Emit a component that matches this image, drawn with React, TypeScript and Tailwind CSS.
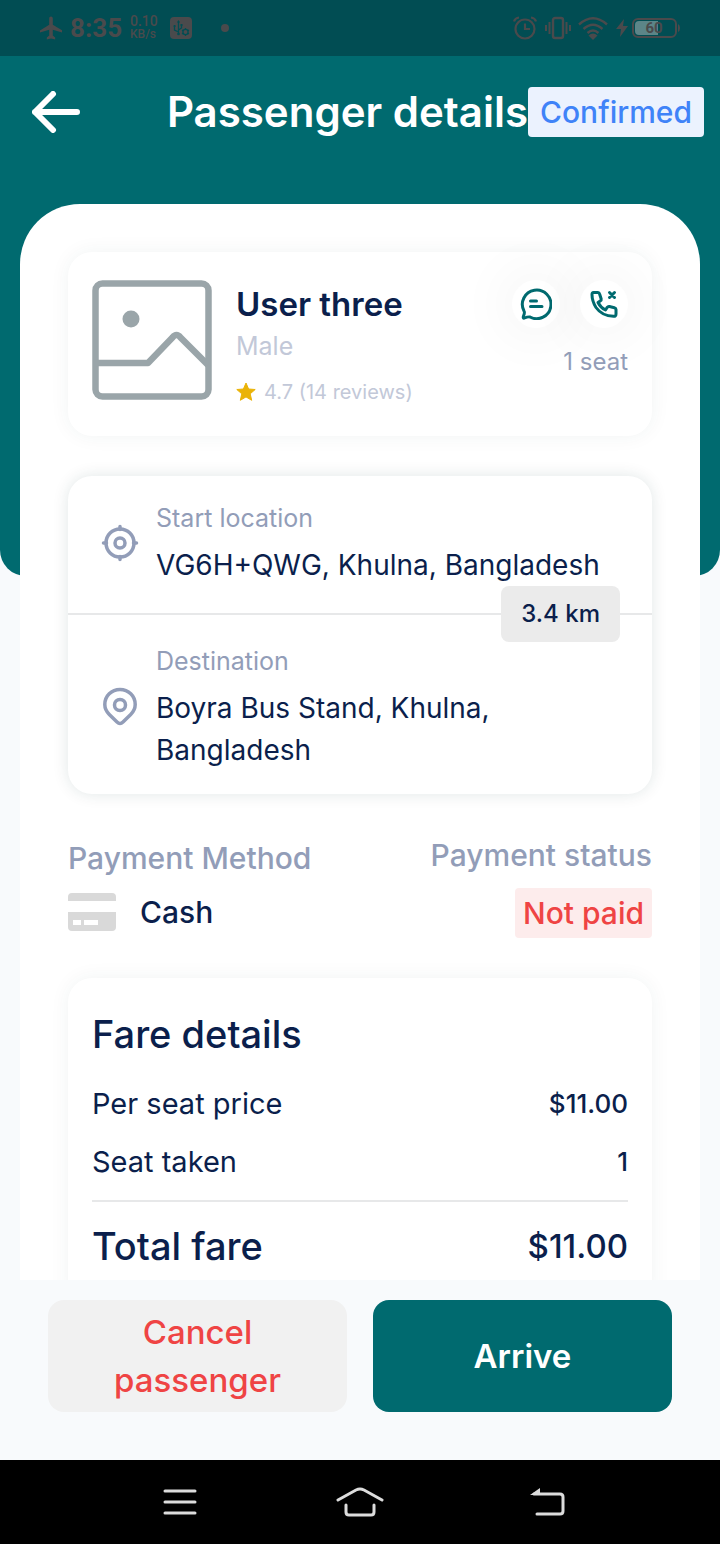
import React from "react";

const rows = [
  { label: "Per seat price", value: "$11.00" },
  { label: "Seat taken", value: "1" },
];

function StatusBar() {
  return (
    <header className="flex h-14 shrink-0 items-center justify-between bg-[#014d53] px-10 text-[#4a4a4c]">
      <div className="flex items-center">
        <svg width="22" height="24" viewBox="0 0 22 24" fill="currentColor" aria-hidden="true">
          <path d="M11 .5c-1.100 0-1.800.9-1.800 2v6.300L0 14.400v2.200l9.200-2.800v5.700l-2.400 2v1.900l4.200-1 4.200 1v-1.900l-2.400-2v-5.700l9.400 2.800v-2.200l-9.400-5.600V2.500c0-1.100-.7-2-1.800-2z" />
        </svg>
        <span className="ml-2 w-[52px] font-[Roboto] text-[26px] font-bold leading-8">8:35</span>
        <span className="ml-2 w-8 font-[Roboto] text-[14px] font-medium leading-[13px]">
          <span className="block">0.10</span>
          <span className="block text-[12px]">KB/s</span>
        </span>
        <svg className="ml-2" width="22" height="22" viewBox="0 0 22 22" aria-hidden="true">
          <rect width="22" height="22" rx="4" fill="currentColor" />
          <g fill="none" stroke="#014d53" strokeWidth="1.300">
            <path d="M8.500 17V4M8.500 15L4.500 13V9M8.500 13l3-2V7" />
            <circle cx="15.500" cy="15" r="2.600" />
            <path d="M15.500 11v1.500M15.500 17.500V19M12 13l1.300.8M17.700 16.200l1.300.8M12 17l1.300-.8M17.700 13.800L19 13" />
          </g>
          <path d="M8.500 3l1.500 2.500H7zM3.700 8h1.800v2H3.700zM10.600 7h1.800v2h-1.800z" fill="#014d53" />
          <circle cx="8.500" cy="17" r="1.300" fill="#014d53" />
        </svg>
        <span className="ml-[29px] h-2 w-2 rounded-full bg-current" />
      </div>
      <div className="flex items-center">
        <svg width="24" height="24" viewBox="0 0 24 24" fill="none" stroke="currentColor" strokeWidth="2.200" aria-hidden="true">
          <circle cx="12" cy="13" r="9.500" />
          <path d="M12 7.500V13h5M1 5.500Q2 2 6 1.500M23 5.500Q22 2 18 1.500" />
        </svg>
        <svg className="ml-2" width="26" height="24" viewBox="0 0 26 24" fill="none" stroke="currentColor" strokeWidth="2" aria-hidden="true">
          <rect x="8" y="2" width="10" height="20" rx="2" strokeWidth="2.400" />
          <path d="M1 9v6M4.500 6v12M21.500 6v12M25 9v6" />
        </svg>
        <svg className="ml-[7px]" width="30" height="24" viewBox="0 0 30 24" fill="none" stroke="currentColor" strokeWidth="2.400" aria-hidden="true">
          <path d="M1 8.500Q15-4 29 8.500M5.500 13Q15 4.500 24.500 13M9.500 17Q15 12 20.500 17" />
          <path d="M10.500 19.500Q15 15.500 19.500 19.500L15 24z" fill="currentColor" stroke="none" />
        </svg>
        <svg className="ml-2" width="12" height="18" viewBox="0 0 12 18" fill="currentColor" aria-hidden="true">
          <path d="M8 0L0 10h5l-1 8 8-11H7z" />
        </svg>
        <svg className="ml-1" width="48" height="20" viewBox="0 0 48 20" aria-hidden="true">
          <rect x="1" y="1" width="43" height="18" rx="5" fill="none" stroke="currentColor" strokeWidth="2" />
          <path d="M7 3h19v14H7a4 4 0 0 1-4-4V7a4 4 0 0 1 4-4z" fill="#5c8588" />
          <path d="M46 6q2 1 2 4t-2 4z" fill="currentColor" />
          <text x="22" y="15" textAnchor="middle" fontFamily="Roboto" fontSize="15" fontWeight="700" fill="currentColor">60</text>
        </svg>
      </div>
    </header>
  );
}

function PassengerCard() {
  return (
    <section className="flex h-[184px] rounded-3xl bg-white px-6 pt-7 shadow-[0_0_20px_rgba(0,60,60,0.06)]">
      <svg className="shrink-0" width="120" height="120" viewBox="0 0 120 120" fill="none" stroke="#9aa5a9" strokeWidth="6.500" aria-label="Passenger photo">
        <rect x="3.500" y="3.500" width="113" height="113" rx="7" />
        <path d="M4 83h52L80.500 57.500q4-5 8 0L116 85" strokeLinejoin="round" />
        <circle cx="39" cy="39" r="8.500" fill="#9aa5a9" stroke="none" />
      </svg>
      <div className="ml-6 min-w-0 flex-1">
        <h2 className="text-[33px] font-semibold leading-[48px] text-[#0b1f4c]">User three</h2>
        <p className="text-[25px] leading-9 text-[#c2c8d8]">Male</p>
        <p className="mt-3 flex items-center text-xl leading-8 text-[#c2c8d8]">
          <svg className="mr-2" width="20" height="20" viewBox="0 0 20 20" fill="#eab308" aria-hidden="true">
            <path d="M10 1l2.600 6 6.600.500-5 4.300 1.500 6.500L10 14.900l-5.700 3.400 1.500-6.500-5-4.300L7.400 7z" stroke="#eab308" strokeLinejoin="round" />
          </svg>
          4.7 (14 reviews)
        </p>
      </div>
      <div className="flex flex-col items-end">
        <div className="flex gap-5">
          <button aria-label="Message" className="flex h-12 w-12 items-center justify-center rounded-full bg-white shadow-[0_0_50px_16px_rgba(0,30,40,0.03)]">
            <svg width="32" height="32" viewBox="0 0 32 32" fill="none" stroke="#006a6f" strokeWidth="3" strokeLinecap="round" strokeLinejoin="round" aria-hidden="true">
              <path d="M4 23A14.300 14.300 0 1 1 10 29Q8.500 28.500 4 30.200Q2.800 30 3.500 28Q5 24.500 4 23z" />
              <path d="M10.500 13h6M10.500 18.500h11.500" />
            </svg>
          </button>
          <button aria-label="Call" className="flex h-12 w-12 items-center justify-center rounded-full bg-white shadow-[0_0_50px_16px_rgba(0,30,40,0.03)]">
            <svg width="32" height="32" viewBox="0 0 32 32" fill="none" stroke="#006a6f" strokeWidth="3" strokeLinecap="round" strokeLinejoin="round" aria-hidden="true">
              <path d="M5.500 4.500H10q1.200 0 1.600 1.500l1.600 5q.3 1.200-1 2l-2.200 1.500Q12.500 19.500 17.500 22l1.700-2.600q.8-1.200 2.200-.9l5 1.200q1.600.4 1.600 1.800V26q0 2.500-2.500 2.300Q14 28 8 19.500 4 13 4 6.500q0-2 1.500-2z" />
              <path d="M21.500 4.500l5 5M26.500 4.500l-5 5" />
            </svg>
          </button>
        </div>
        <p className="mt-4 text-[24px] leading-9 text-[#929db8]">1 seat</p>
      </div>
    </section>
  );
}

function RouteCard() {
  return (
    <section className="mt-10 rounded-3xl bg-white shadow-[0_0_16px_rgba(0,60,60,0.12)]">
      <div className="relative flex h-[139px] items-center border-b-2 border-[#e7e8e9] pb-1 pl-8 pr-6">
        <svg className="shrink-0" width="40" height="40" viewBox="0 0 40 40" fill="none" stroke="#929db8" strokeWidth="3.500" strokeLinecap="round" aria-hidden="true">
          <circle cx="20" cy="20" r="14" />
          <circle cx="20" cy="20" r="5" />
          <path d="M20 3.500v3M20 33.500v3M3.500 20h3M33.500 20h3" />
        </svg>
        <div className="ml-4">
          <p className="text-[25px] leading-9 text-[#929db8]">Start location</p>
          <p className="mt-2 text-[28px] leading-[42px]">VG6H+QWG, Khulna, Bangladesh</p>
        </div>
        <span className="absolute -bottom-[29px] right-8 rounded-lg bg-[#ebebeb] px-5 py-2 text-[24px] font-medium leading-10">3.4 km</span>
      </div>
      <div className="flex h-[179px] items-center pl-8 pr-6 pt-1">
        <svg className="shrink-0" width="40" height="40" viewBox="0 0 40 40" fill="none" stroke="#929db8" strokeWidth="3.500" strokeLinejoin="round" aria-hidden="true">
          <path d="M20 2.500C11.500 2.500 4.800 9 4.800 17.500c0 5 2 7.500 4.500 10L17 35q3 3 6 0l7.700-7.500c2.500-2.500 4.500-5 4.500-10C35.200 9 28.500 2.500 20 2.500z" />
          <circle cx="20" cy="18" r="5.500" />
        </svg>
        <div className="ml-4">
          <p className="text-[25px] leading-9 text-[#929db8]">Destination</p>
          <p className="mt-2 text-[28px] leading-[42px]">Boyra Bus Stand, Khulna, Bangladesh</p>
        </div>
      </div>
    </section>
  );
}

export default function App() {
  return (
    <div className="flex h-screen flex-col bg-[#f8fafc] font-['Inter',sans-serif] text-[#0b1f4c]">
      <StatusBar />
      <main className="grid min-h-0 flex-1 content-start overflow-y-auto [scrollbar-width:none]">
        <div className="col-start-1 row-start-1 h-[520px] rounded-b-[26px] bg-[#006a6f]" />
        <div className="col-start-1 row-start-1">
          <div className="flex h-[148px] items-start pl-8 pr-4 pt-[31px]">
            <button aria-label="Back" className="flex h-[50px] w-12 shrink-0 items-center">
              <svg width="48" height="42" viewBox="0 0 48 42" fill="none" stroke="white" strokeWidth="6" strokeLinecap="round" strokeLinejoin="round" aria-hidden="true">
                <path d="M45 21H3M21 3L3 21l18 18" />
              </svg>
            </button>
            <h1 className="flex-1 whitespace-nowrap text-right text-[42px] font-semibold leading-[50px] text-white">Passenger details</h1>
            <span className="rounded bg-[#ebf2fe] px-3 text-[30px] font-medium leading-[50px] text-[#3f83f8]">Confirmed</span>
          </div>
          <div className="mx-5 rounded-t-[60px] bg-white px-12 pb-16 pt-12">
            <PassengerCard />
            <RouteCard />
            <section className="mt-10 flex justify-between text-[30px] font-medium leading-[42px]">
              <div>
                <h3 className="mt-[3px] text-[#929db8]">Payment Method</h3>
                <div className="mt-3 flex items-center gap-6">
                  <svg width="48" height="38" viewBox="0 0 48 38" fill="#d9d9d9" aria-hidden="true">
                    <path d="M4 0h40a4 4 0 0 1 4 4v4H0V4a4 4 0 0 1 4-4zM0 19h48v15a4 4 0 0 1-4 4H4a4 4 0 0 1-4-4z" />
                    <path d="M5 27h8v5H5zM16 27h14v5H16z" fill="white" />
                  </svg>
                  Cash
                </div>
              </div>
              <div className="flex flex-col items-end">
                <h3 className="text-[#929db8]">Payment status</h3>
                <span className="mt-3 rounded bg-[#fdecec] px-2 leading-[50px] text-[#ef4444]">Not paid</span>
              </div>
            </section>
            <section className="mt-10 rounded-3xl bg-white px-6 pb-10 pt-7 shadow-[0_0_20px_rgba(0,60,60,0.06)]">
              <h2 className="text-[38px] font-medium leading-[56px]">Fare details</h2>
              <dl className="mt-[21px] flex flex-col gap-4 border-b-2 border-[#e7e8e9] pb-[17px]">
                {rows.map((row) => (
                  <div key={row.label} className="flex justify-between text-[29px] leading-[42px]">
                    <dt>{row.label}</dt>
                    <dd className="text-[26px] font-medium">{row.value}</dd>
                  </div>
                ))}
              </dl>
              <div className="mt-4 flex justify-between text-[38px] font-medium leading-[56px]">
                <span>Total fare</span>
                <span className="text-[33px]">$11.00</span>
              </div>
            </section>
          </div>
        </div>
      </main>
      <footer className="shrink-0">
        <div className="flex gap-[26px] px-12 pb-12 pt-5 text-[33px] leading-[48px]">
          <button className="flex-1 rounded-2xl bg-[#f1f1f1] px-8 py-2 font-medium text-[#ef4444]">Cancel passenger</button>
          <button className="flex-1 rounded-2xl bg-[#006a6f] px-8 py-2 font-semibold text-white">Arrive</button>
        </div>
        <nav className="grid h-[84px] grid-cols-3 items-center bg-black px-[12.5%]">
          <button aria-label="Recent apps" className="flex justify-center">
            <svg width="34" height="28" viewBox="0 0 34 28" fill="none" stroke="#dcdcdc" strokeWidth="3" strokeLinecap="round" aria-hidden="true">
              <path d="M2 3h30M2 14h30M2 25h30" />
            </svg>
          </button>
          <button aria-label="Home" className="flex justify-center">
            <svg width="48" height="30" viewBox="0 0 48 30" fill="none" stroke="#dcdcdc" strokeWidth="3" strokeLinecap="round" aria-hidden="true">
              <path d="M2 13L20 3q4-2 8 0l18 10M10 18v7q0 3 3 3h22q3 0 3-3v-7" />
            </svg>
          </button>
          <button aria-label="Back to previous screen" className="flex justify-center pl-4">
            <svg width="36" height="30" viewBox="0 0 36 30" fill="none" stroke="#dcdcdc" strokeWidth="3" strokeLinecap="round" aria-hidden="true">
              <path d="M4 7h26q3 0 3 3v14q0 3-3 3H7" />
              <path d="M0 8L10 1v7z" fill="#dcdcdc" stroke="none" />
            </svg>
          </button>
        </nav>
      </footer>
    </div>
  );
}
